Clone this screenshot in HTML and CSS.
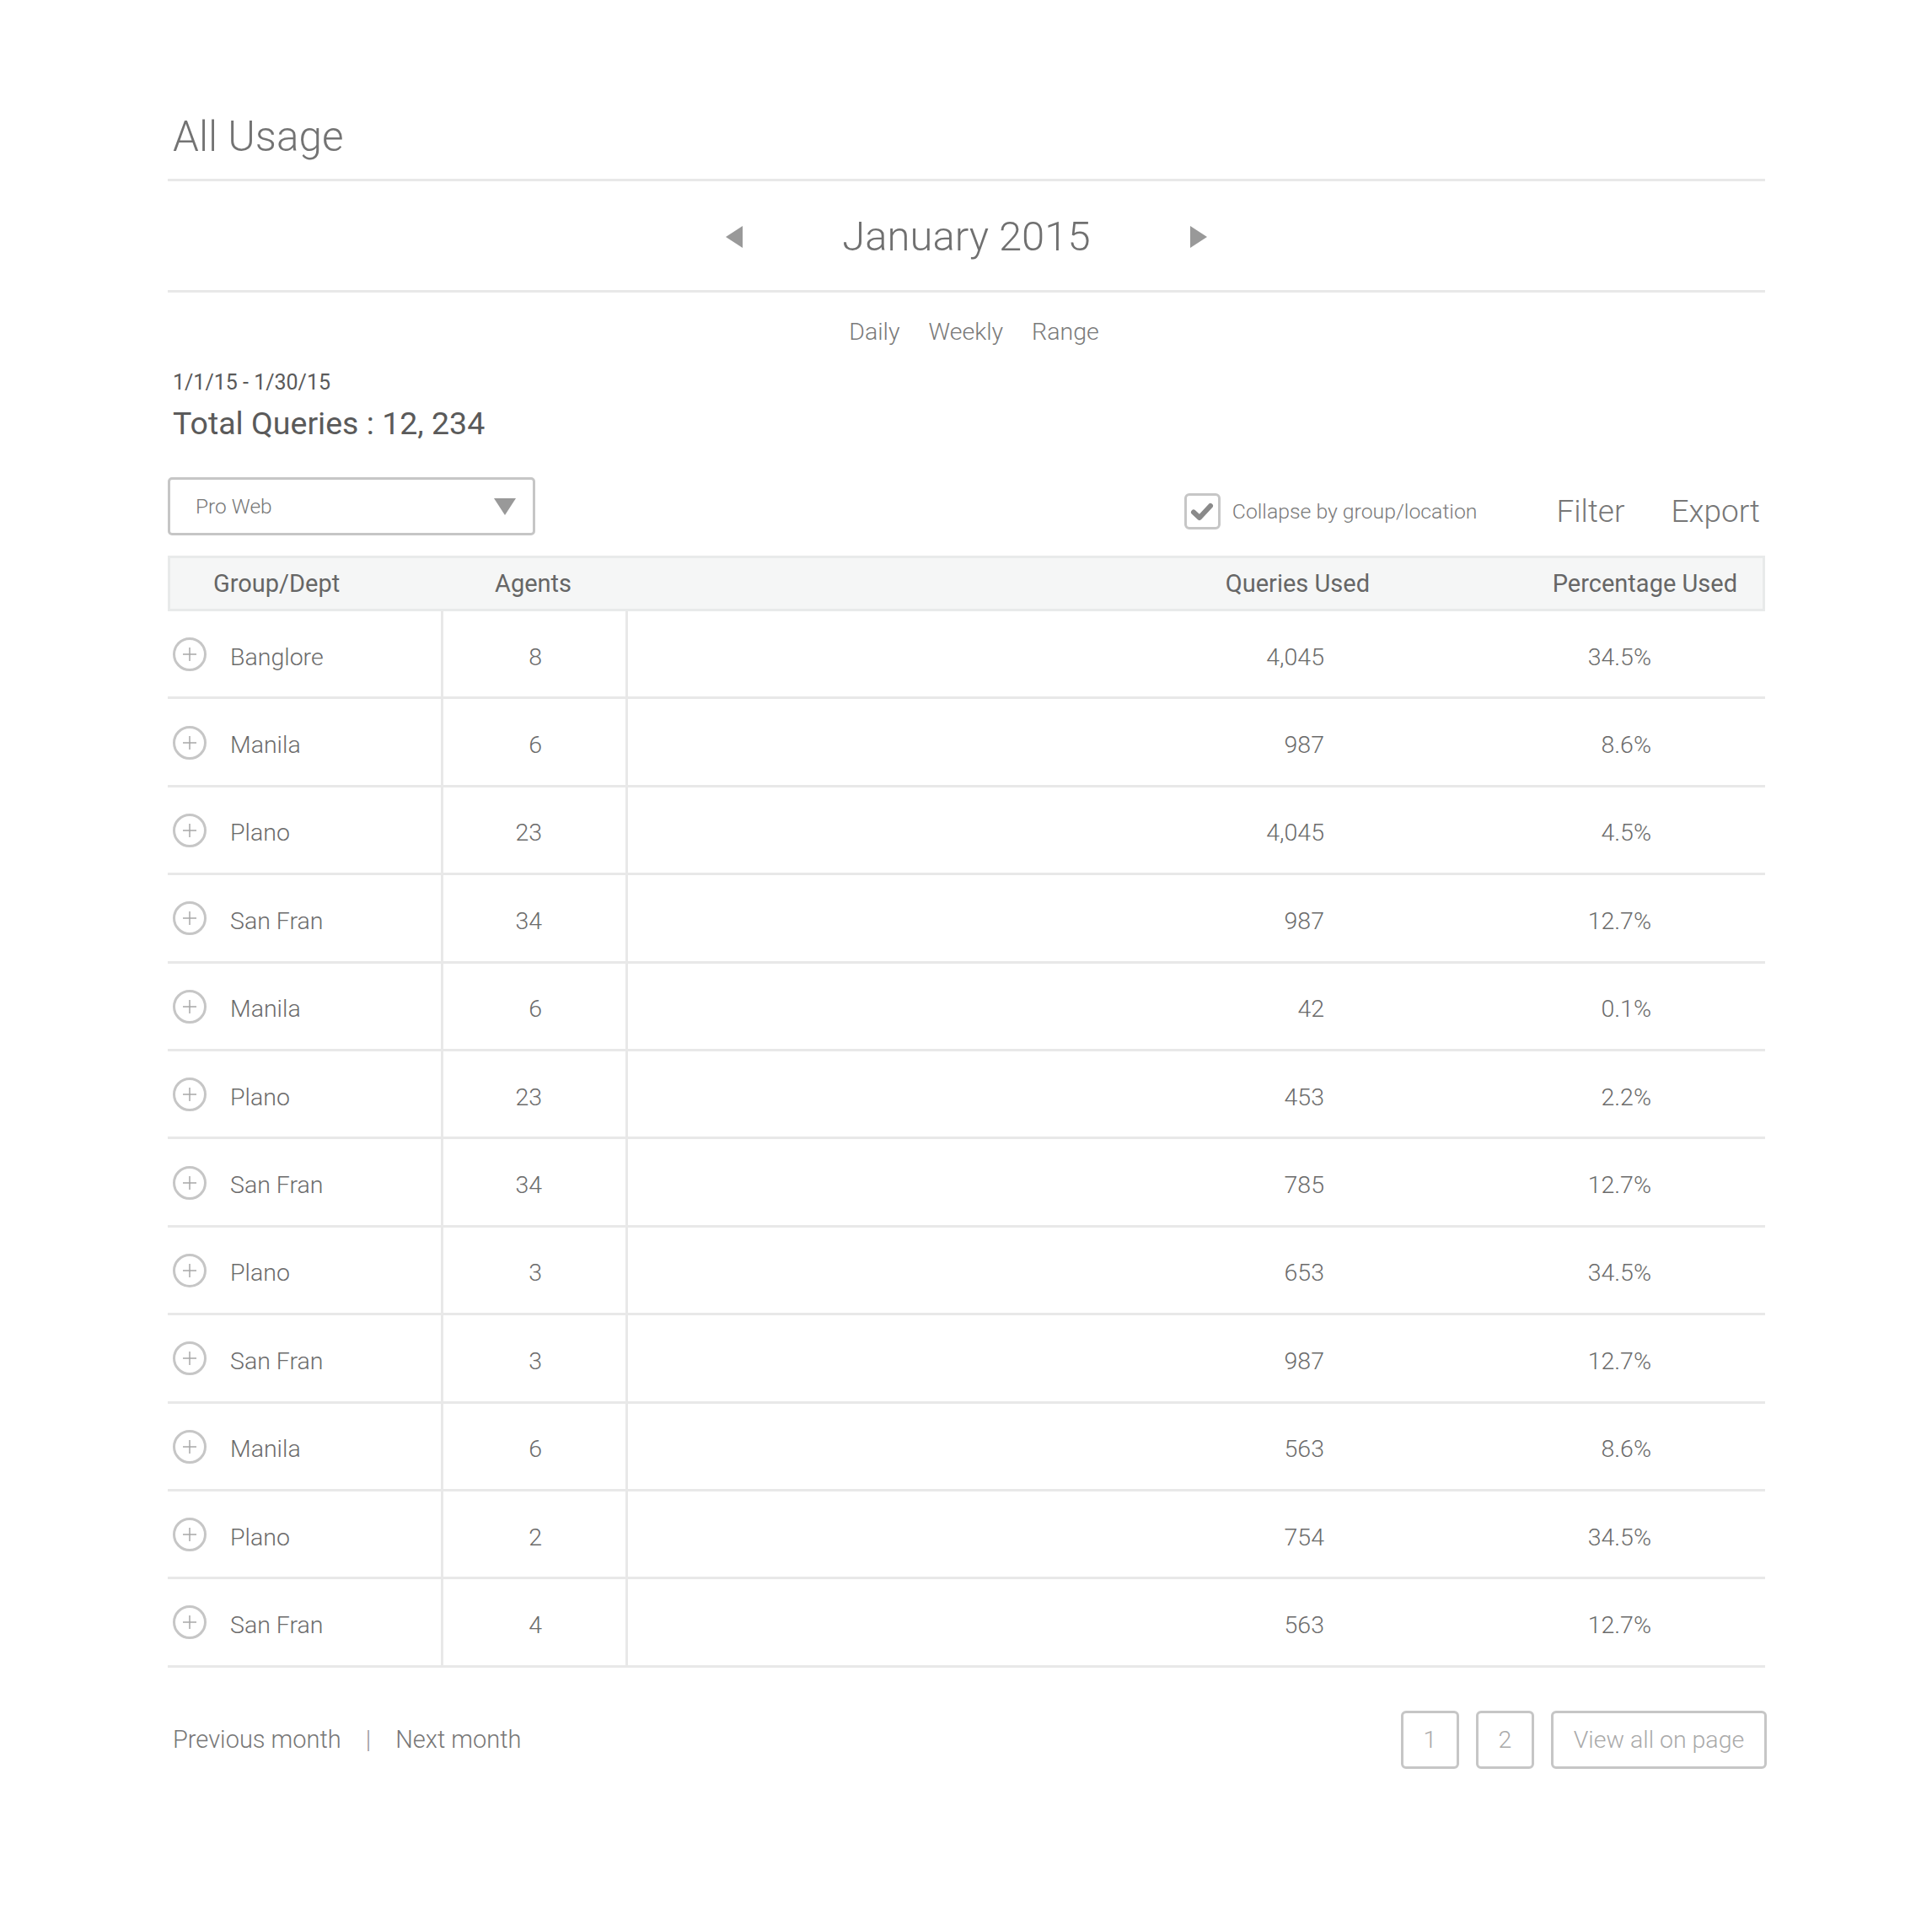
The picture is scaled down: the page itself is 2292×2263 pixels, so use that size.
FILE: index.html
```html
<!DOCTYPE html>
<html lang="en">
<head>
<meta charset="utf-8">
<title>All Usage</title>
<link rel="stylesheet" href="styles.css">
</head>
<body>
<div class="page">
  <header class="title-bar">
    <h1 class="title">All Usage</h1>
  </header>

  <nav class="month-nav">
    <span class="arrow arrow-left"></span>
    <span class="month">January 2015</span>
    <span class="arrow arrow-right"></span>
  </nav>

  <div class="tabs">
    <span class="tab">Daily</span>
    <span class="tab">Weekly</span>
    <span class="tab">Range</span>
  </div>

  <div class="summary">
    <div class="date-range">1/1/15 - 1/30/15</div>
    <div class="total">Total Queries : 12, 234</div>
  </div>

  <div class="toolbar">
    <div class="select">
      <span class="select-label">Pro Web</span>
      <span class="caret"></span>
    </div>
    <div class="actions">
      <label class="check">
        <span class="checkbox">
          <svg width="30" height="30" viewBox="0 0 30 30"><path d="M5 15.5 L12 22 L25 8" fill="none" stroke="#8a8a8a" stroke-width="6" stroke-linecap="round" stroke-linejoin="round"/></svg>
        </span>
        <span class="check-label">Collapse by group/location</span>
      </label>
      <span class="action filter">Filter</span>
      <span class="action">Export</span>
    </div>
  </div>

  <div class="table">
    <div class="thead">
      <div class="th th-group">Group/Dept</div>
      <div class="th th-agents">Agents</div>
      <div class="th th-queries">Queries Used</div>
      <div class="th th-pct">Percentage Used</div>
    </div>
    <div class="tbody" id="rows"></div>
  </div>

  <footer class="footer">
    <div class="month-links">
      <span class="link">Previous month</span>
      <span class="sep">|</span>
      <span class="link">Next month</span>
    </div>
    <div class="pager">
      <span class="page-btn">1</span>
      <span class="page-btn">2</span>
      <span class="page-btn wide">View all on page</span>
    </div>
  </footer>
</div>
<script>
var data = [
  ["Banglore","8","4,045","34.5%"],
  ["Manila","6","987","8.6%"],
  ["Plano","23","4,045","4.5%"],
  ["San Fran","34","987","12.7%"],
  ["Manila","6","42","0.1%"],
  ["Plano","23","453","2.2%"],
  ["San Fran","34","785","12.7%"],
  ["Plano","3","653","34.5%"],
  ["San Fran","3","987","12.7%"],
  ["Manila","6","563","8.6%"],
  ["Plano","2","754","34.5%"],
  ["San Fran","4","563","12.7%"]
];
var icon = '<svg class="plus" width="42" height="42" viewBox="0 0 42 42"><circle cx="21" cy="21" r="18.5" fill="none" stroke="#c6c6c6" stroke-width="3"/><path d="M21 13 V29 M13 21 H29" stroke="#a8a8a8" stroke-width="1.5"/></svg>';
var html = "";
data.forEach(function (r) {
  html += '<div class="tr">' +
    '<div class="td td-group">' + icon + '<span class="name">' + r[0] + '</span></div>' +
    '<div class="td td-agents">' + r[1] + '</div>' +
    '<div class="td td-queries">' + r[2] + '</div>' +
    '<div class="td td-pct">' + r[3] + '</div>' +
    '</div>';
});
document.getElementById("rows").innerHTML = html;
</script>
</body>
</html>
```

FILE: styles.css
```css
* { box-sizing: border-box; }

html, body {
  margin: 0;
  padding: 0;
  background: #ffffff;
}

body {
  font-family: "Roboto Light", Roboto, "Noto Sans", "Liberation Sans", sans-serif;
  font-weight: 300;
  color: #6b6b6b;
}

.page {
  width: 2094px;
  padding: 133px 0 0 199px;
}

.title-bar {
  padding-bottom: 21px;
  border-bottom: 3px solid #e8e8e8;
}

.title {
  margin: 0 0 0 6px;
  font-size: 49.5px;
  line-height: 58px;
  font-weight: 300;
  color: #737373;
}

.month-nav {
  height: 132px;
  padding-top: 3px;
  display: flex;
  align-items: center;
  justify-content: center;
  gap: 118px;
  border-bottom: 3px solid #e8e8e8;
}

.month {
  font-size: 49px;
  line-height: 58px;
  color: #707070;
  font-weight: 300;
}

.arrow {
  width: 0;
  height: 0;
  border-top: 13px solid transparent;
  border-bottom: 13px solid transparent;
}

.arrow-left { border-right: 20px solid #999999; }
.arrow-right { border-left: 20px solid #999999; }

.tabs {
  margin-top: 30px;
  display: flex;
  justify-content: center;
  gap: 34px;
  padding-left: 18px;
  font-size: 28.5px;
  line-height: 34px;
  color: #7a7a7a;
}

.summary {
  margin-top: 28px;
  padding-left: 6px;
}

.date-range {
  font-family: Roboto, "Noto Sans", "Liberation Sans", sans-serif;
  font-size: 25px;
  line-height: 30px;
  font-weight: 400;
  color: #5a5a5a;
}

.total {
  font-family: Roboto, "Noto Sans", "Liberation Sans", sans-serif;
  margin-top: 11px;
  font-size: 37.5px;
  line-height: 44px;
  font-weight: 400;
  color: #5a5a5a;
}

.toolbar {
  margin-top: 42px;
  display: flex;
  justify-content: space-between;
  align-items: center;
}

.select {
  width: 436px;
  height: 69px;
  border: 3px solid #c6c6c6;
  border-radius: 5px;
  display: flex;
  align-items: center;
  justify-content: space-between;
  padding: 0 20px 0 30px;
}

.select-label {
  font-size: 24.5px;
  color: #777777;
}

.caret {
  width: 0;
  height: 0;
  border-left: 13px solid transparent;
  border-right: 13px solid transparent;
  border-top: 20px solid #999999;
}

.actions {
  display: flex;
  align-items: center;
  padding-top: 12px;
  padding-right: 6px;
}

.check {
  display: flex;
  align-items: center;
  gap: 14px;
}

.checkbox {
  width: 43px;
  height: 43px;
  border: 3px solid #c6c6c6;
  border-radius: 6px;
  display: flex;
  align-items: center;
  justify-content: center;
}

.check-label {
  font-size: 24.8px;
  color: #7a7a7a;
}

.action {
  font-size: 37px;
  line-height: 44px;
  color: #777777;
  margin-left: 55px;
}

.action.filter { margin-left: 94px; }

.table {
  margin-top: 24px;
}

.thead,
.tr {
  display: grid;
  grid-template-columns: 327px 219px 1fr 466px;
}

.thead {
  height: 66px;
  background: #f5f6f6;
  border: 3px solid #e8eaea;
  align-items: center;
  font-family: Roboto, "Noto Sans", "Liberation Sans", sans-serif;
  font-size: 29px;
  font-weight: 400;
  color: #666666;
}

.th-group { padding-left: 51px; }
.th-agents { padding-left: 58px; }
.th-queries { text-align: right; padding-right: 0; }
.th-pct { text-align: right; padding-right: 30px; }

.tr {
  height: 104.4px;
  border-bottom: 3px solid #e8e8e8;
  font-size: 28.5px;
  color: #6b6b6b;
}

.td {
  display: flex;
  align-items: center;
  padding-top: 7px;
}

.td-group {
  padding-left: 5px;
  border-right: 3px solid #e8e8e8;
}

.plus { flex: none; margin-top: -6px; }

.name { margin-left: 27px; }

.td-agents {
  justify-content: flex-end;
  padding-right: 99px;
  border-right: 3px solid #e8e8e8;
}

.td-queries {
  justify-content: flex-end;
  padding-right: 57px;
}

.td-pct {
  justify-content: flex-end;
  padding-right: 135px;
}

.footer {
  margin-top: 51px;
  display: flex;
  justify-content: space-between;
  align-items: center;
}

.month-links {
  display: flex;
  align-items: center;
  gap: 29px;
  padding-left: 6px;
  font-size: 29px;
  color: #777777;
}

.sep { color: #999999; }

.pager {
  display: flex;
  gap: 20px;
  margin-right: -2px;
}

.page-btn {
  min-width: 69px;
  height: 69px;
  border: 3px solid #c6c6c6;
  border-radius: 6px;
  display: flex;
  align-items: center;
  justify-content: center;
  font-size: 28.5px;
  color: #aaaaaa;
}

.page-btn.wide {
  width: 256px;
}
```
